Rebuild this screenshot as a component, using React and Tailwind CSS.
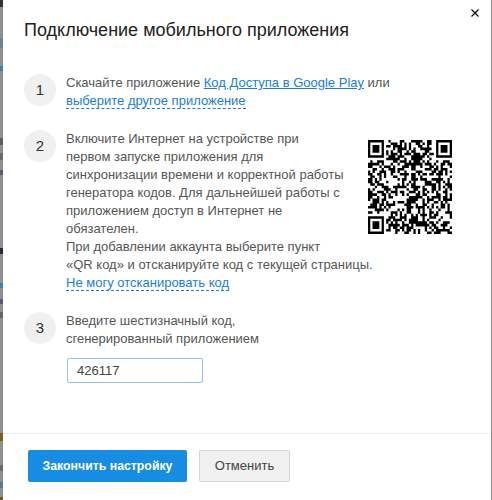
const finder = (x, y) => [
  `M${x} ${y}h7v7h-7z`,
  `M${x + 1} ${y + 1}v5h5v-5z`,
  `M${x + 2} ${y + 2}h3v3h-3z`,
]

// leftovers of the page behind the dimmed backdrop
const backdropBits = [
  'top-0 h-[7px] bg-[#333]',
  'top-[38px] h-[10px] bg-[#6f8296]',
  'top-[66px] h-[5px] bg-[#3f7fb5]',
  'top-[138px] h-[7px] bg-[#5f5f5f]',
  'top-[153px] h-[7px] bg-[#6a6a6a]',
  'top-[170px] h-[5px] bg-[#5a5a78]',
  'top-[248px] h-[6px] bg-[#2a2a40]',
  'top-[283px] h-[5px] bg-[#3585ad]',
  'top-[299px] h-[5px] bg-[#6a4f80]',
  'top-[312px] h-[6px] bg-[#666]',
  'top-[433px] h-[8px] bg-[#7a6020]',
  'top-[465px] h-[6px] bg-[#6a6a6a]',
  'top-[482px] h-[6px] bg-[#5f7796]',
  'top-[497px] h-[3px] bg-[#6b5a3a]',
]

const QrCode = () => {
  const size = 37
  let seed = 426117
  let path = ''
  for (let row = 0; row < size; row++) {
    for (let col = 0; col < size; col++) {
      seed = (seed * 1103515245 + 12345) & 0x7fffffff
      const inFinder = (row < 8 && col < 8) || (row < 8 && col >= size - 8) || (row >= size - 8 && col < 8)
      if (!inFinder && (seed >> 16) % 100 < 50) path += `M${col} ${row}h1v1h-1z`
    }
  }
  return (
    <svg viewBox="0 0 37 37" width="84" height="94" preserveAspectRatio="none" className="float-right mt-[10px] mr-[39px]">
      <path fill="#000" fillRule="evenodd" d={[...finder(0, 0), ...finder(30, 0), ...finder(0, 30)].join('') + path} />
    </svg>
  )
}

const Step = ({ num, className, children }) => (
  <div className={`flex ${className}`}>
    <div className="w-8 h-8 shrink-0 rounded-full bg-[#f0f0f0] flex items-center justify-center text-[15px] text-[#333]">{num}</div>
    <div className="ml-[10px] flex-1 text-[13px] leading-[18px] text-[#555]">{children}</div>
  </div>
)

const App = () => {
  return (
    <div className="flex w-[492px] h-[500px] overflow-hidden font-['Liberation_Sans',Arial,sans-serif]">
      <div className="relative w-[3px] shrink-0 bg-[#8f8f8f]">
        {backdropBits.map((bit) => (
          <span key={bit} className={`absolute left-0 w-[3px] ${bit}`} />
        ))}
      </div>
      <div className="relative flex-1 bg-white flex flex-col">
        <button className="absolute top-[9px] right-[12px] text-black">
          <svg width="8" height="8" viewBox="0 0 8 8" className="block">
            <path d="M0.5 0.5L7.5 7.5M7.5 0.5L0.5 7.5" stroke="#111" strokeWidth="1.3" />
          </svg>
        </button>

        <h1 className="pl-[21px] pt-[20px] text-[18px] leading-[21px] font-normal text-[#222]">Подключение мобильного приложения</h1>

        <div className="flex-1 pl-[21px]">
          <Step num="1" className="mt-[33px]">
            Скачайте приложение <a className="text-[#1a7dd8] underline">Код Доступа в Google Play</a> или<br />
            <a className="text-[#1a7dd8] border-b border-dashed border-[#1a7dd8]">выберите другое приложение</a>
          </Step>

          <Step num="2" className="mt-[20px]">
            <QrCode />
            Включите Интернет на устройстве при<br />
            первом запуске приложения для<br />
            синхронизации времени и корректной работы<br />
            генератора кодов. Для дальнейшей работы с<br />
            приложением доступ в Интернет не<br />
            обязателен.<br />
            При добавлении аккаунта выберите пункт<br />
            «QR код» и отсканируйте код с текущей страницы.<br />
            <a className="text-[#1a7dd8] border-b border-dashed border-[#1a7dd8]">Не могу отсканировать код</a>
          </Step>

          <Step num="3" className="mt-[20px]">
            Введите шестизначный код,<br />
            сгенерированный приложением
            <input
              readOnly
              value="426117"
              className="block mt-[10px] ml-px w-[136px] h-[25px] px-[9px] text-[13px] text-[#444] border border-[#8fc0ee] rounded-[2px] outline-none"
            />
          </Step>
        </div>

        <div className="h-[67px] border-t border-[#eeeeee] pl-[25px] pt-[16px] flex items-start gap-3">
          <button className="w-[159px] h-8 rounded-[2px] bg-[#168de2] text-white text-[12.3px] font-bold">Закончить настройку</button>
          <button className="w-[91px] h-8 rounded-[2px] bg-[#f0f0f0] border border-[#d5d5d5] text-[#444] text-[13px]">Отменить</button>
        </div>
      </div>
      <div className="w-px shrink-0 bg-[#8f8f8f]" />
    </div>
  )
}

export default App
